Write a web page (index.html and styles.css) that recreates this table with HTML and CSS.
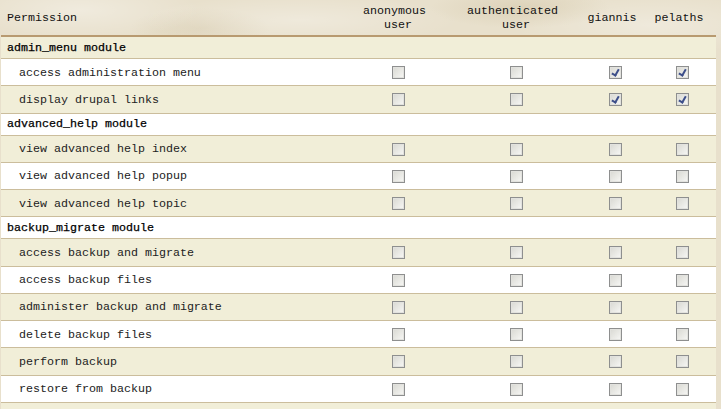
FILE: index.html
```html
<!DOCTYPE html>
<html>
<head>
<meta charset="utf-8">
<link rel="stylesheet" href="styles.css">
</head>
<body>
<div class="page">
<table class="perms">
  <colgroup>
    <col class="c-perm"><col class="c-anon"><col class="c-auth"><col class="c-gian"><col class="c-pel">
  </colgroup>
  <thead>
    <tr>
      <th class="h-perm">Permission</th>
      <th class="h-role">anonymous&nbsp;<br>user</th>
      <th class="h-role">authenticated&nbsp;<br>user</th>
      <th class="h-role single">giannis</th>
      <th class="h-role single">pelaths</th>
    </tr>
  </thead>
  <tbody>
    <tr class="module odd"><td colspan="5">admin_menu module</td></tr>
    <tr class="perm even"><td class="name">access administration menu</td><td><span class="cb"></span></td><td><span class="cb"></span></td><td><span class="cb on"></span></td><td><span class="cb on"></span></td></tr>
    <tr class="perm odd"><td class="name">display drupal links</td><td><span class="cb"></span></td><td><span class="cb"></span></td><td><span class="cb on"></span></td><td><span class="cb on"></span></td></tr>
    <tr class="module even"><td colspan="5">advanced_help module</td></tr>
    <tr class="perm odd"><td class="name">view advanced help index</td><td><span class="cb"></span></td><td><span class="cb"></span></td><td><span class="cb"></span></td><td><span class="cb"></span></td></tr>
    <tr class="perm even"><td class="name">view advanced help popup</td><td><span class="cb"></span></td><td><span class="cb"></span></td><td><span class="cb"></span></td><td><span class="cb"></span></td></tr>
    <tr class="perm odd"><td class="name">view advanced help topic</td><td><span class="cb"></span></td><td><span class="cb"></span></td><td><span class="cb"></span></td><td><span class="cb"></span></td></tr>
    <tr class="module even"><td colspan="5">backup_migrate module</td></tr>
    <tr class="perm odd"><td class="name">access backup and migrate</td><td><span class="cb"></span></td><td><span class="cb"></span></td><td><span class="cb"></span></td><td><span class="cb"></span></td></tr>
    <tr class="perm even"><td class="name">access backup files</td><td><span class="cb"></span></td><td><span class="cb"></span></td><td><span class="cb"></span></td><td><span class="cb"></span></td></tr>
    <tr class="perm odd"><td class="name">administer backup and migrate</td><td><span class="cb"></span></td><td><span class="cb"></span></td><td><span class="cb"></span></td><td><span class="cb"></span></td></tr>
    <tr class="perm even"><td class="name">delete backup files</td><td><span class="cb"></span></td><td><span class="cb"></span></td><td><span class="cb"></span></td><td><span class="cb"></span></td></tr>
    <tr class="perm odd"><td class="name">perform backup</td><td><span class="cb"></span></td><td><span class="cb"></span></td><td><span class="cb"></span></td><td><span class="cb"></span></td></tr>
    <tr class="perm even"><td class="name">restore from backup</td><td><span class="cb"></span></td><td><span class="cb"></span></td><td><span class="cb"></span></td><td><span class="cb"></span></td></tr>
    <tr class="perm odd"><td class="name">&nbsp;</td><td></td><td></td><td></td><td></td></tr>
  </tbody>
</table>
</div>
</body>
</html>
```
FILE: styles.css
```css
html, body {
  margin: 0;
  padding: 0;
}
body {
  background-color: #e8e0cc;
  background-image:
    radial-gradient(ellipse 120px 30px at 80px 10px, rgba(255,255,255,0.35), transparent),
    radial-gradient(ellipse 160px 25px at 300px 20px, rgba(255,255,255,0.3), transparent),
    radial-gradient(ellipse 90px 20px at 520px 8px, rgba(200,185,150,0.35), transparent),
    radial-gradient(ellipse 140px 30px at 650px 25px, rgba(255,255,255,0.3), transparent),
    radial-gradient(ellipse 70px 20px at 200px 28px, rgba(200,185,150,0.3), transparent);
  font-family: "Liberation Mono", "Courier New", monospace;
  font-size: 11.67px;
  color: #111;
  overflow: hidden;
}
.page {
  padding-left: 1px;
  width: 715px;
  height: 409px;
  overflow: hidden;
}
.perms {
  border-collapse: collapse;
  table-layout: fixed;
  width: 715px;
}
.c-perm { width: 345px; }
.c-anon { width: 104px; }
.c-auth { width: 132px; }
.c-gian { width: 66px; }
.c-pel { width: 68px; }

.perms th {
  height: 34px;
  padding: 1px 0 0 0;
  font-weight: normal;
  color: #111;
  line-height: 14px;
  border-bottom: 2px solid #b89a70;
  vertical-align: middle;
}
.h-perm {
  text-align: left;
  padding-left: 6px !important;
}
.h-role {
  text-align: center;
}
.h-role.single {
  padding-right: 6px !important;
}
.perms td {
  padding: 0;
  border-bottom: 1px solid #cbbd9c;
  text-align: center;
  vertical-align: middle;
}
.odd td { background: #f1eed8; }
.even td { background: #ffffff; }

.module td {
  height: 21px;
  text-align: left;
  padding-left: 6px;
  color: #000;
  -webkit-text-stroke: 0.25px #000;
}
.perm td {
  height: 25.25px;
  padding-top: 1px;
}
.perm td.name {
  text-align: left;
  padding-left: 18px;
  color: #222;
}
.cb {
  display: inline-block;
  box-sizing: border-box;
  width: 13px;
  height: 13px;
  vertical-align: middle;
  border: 1px solid #8e8f8f;
  background: linear-gradient(135deg, #d8d8d2 0%, #ebebe7 60%, #f8f8f6 100%);
  box-shadow: inset 0 0 0 1px #e2e2de;
  position: relative;
}
.cb.on::after {
  content: "";
  position: absolute;
  left: 3px;
  top: 1px;
  width: 3px;
  height: 6px;
  border: solid #3d4f8a;
  border-width: 0 2px 2px 0;
  transform: rotate(30deg);
}
```
